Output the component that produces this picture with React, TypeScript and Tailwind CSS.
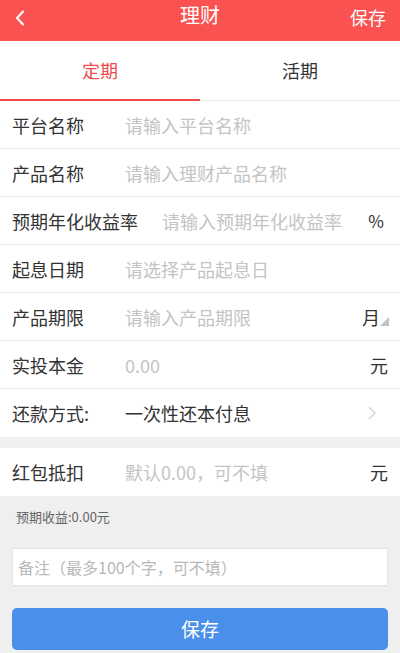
import React from "react";

const font = { fontFamily: '"Noto Sans CJK SC", "Noto Sans", sans-serif' };

function Row({
  label,
  placeholder,
  value,
  suffix,
  last,
}: {
  label: string;
  placeholder?: string;
  value?: string;
  suffix?: React.ReactNode;
  last?: boolean;
}) {
  return (
    <div
      className={`flex items-center h-[48px] pl-[12px] pr-[12px] bg-white ${
        last ? "" : "border-b border-[#eeeeee]"
      }`}
    >
      <div className="min-w-[89px] mr-[24px] text-[18px] text-[#333333] whitespace-nowrap leading-none">
        {label}
      </div>
      <div
        className={`flex-1 text-[18px] leading-none whitespace-nowrap ${
          value ? "text-[#333333]" : "text-[#c4c4c4]"
        }`}
      >
        {value ?? placeholder}
      </div>
      {suffix}
    </div>
  );
}

export default function App() {
  return (
    <div className="w-[400px] h-[653px] bg-[#efefef] overflow-hidden" style={font}>
      {/* Header */}
      <div className="h-[41px] bg-[#fa5151] flex items-center justify-between px-[14px] pb-[10px] pt-[2px] relative">
        <svg width="12" height="16" viewBox="0 0 12 16" className="mt-[2px]">
          <path d="M9 1.5 L3 8 L9 14.5" fill="none" stroke="white" strokeWidth="2" strokeLinecap="round" strokeLinejoin="round" />
        </svg>
        <div className="absolute left-1/2 -translate-x-1/2 top-[2px] text-white text-[20px] leading-[26px]">理财</div>
        <div className="text-white text-[18px] leading-[26px] mr-[0px]">保存</div>
      </div>

      {/* Tabs */}
      <div className="h-[60px] bg-white flex border-b border-[#eeeeee]">
        <div className="flex-1 flex items-center justify-center relative text-[18px] text-[#f04b4b]">
          定期
          <div className="absolute left-0 right-0 bottom-[-1px] h-[2px] bg-[#f04b4b]" />
        </div>
        <div className="flex-1 flex items-center justify-center text-[18px] text-[#333333]">活期</div>
      </div>

      {/* Form */}
      <div className="bg-white">
        <Row label="平台名称" placeholder="请输入平台名称" />
        <Row label="产品名称" placeholder="请输入理财产品名称" />
        <Row
          label="预期年化收益率"
          placeholder="请输入预期年化收益率"
          suffix={<span className="text-[17px] text-[#333333] leading-none pr-[4px]">%</span>}
        />
        <Row label="起息日期" placeholder="请选择产品起息日" />
        <Row
          label="产品期限"
          placeholder="请输入产品期限"
          suffix={
            <span className="flex items-end">
              <span className="text-[18px] text-[#333333] leading-none">月</span>
              <svg width="9" height="9" viewBox="0 0 9 9" className="mb-[0px] -mr-[1px]">
                <path d="M9 0 L9 9 L0 9 Z" fill="#c0c4c8" />
              </svg>
            </span>
          }
        />
        <Row
          label="实投本金"
          placeholder="0.00"
          suffix={<span className="text-[18px] text-[#333333] leading-none">元</span>}
        />
        <Row
          label="还款方式:"
          value="一次性还本付息"
          last
          suffix={
            <svg width="8" height="14" viewBox="0 0 8 14" className="mr-[12px]">
              <path d="M1 1 L7 7 L1 13" fill="none" stroke="#cfcfcf" strokeWidth="1.3" />
            </svg>
          }
        />
      </div>

      <div className="h-[11px]" />

      <div className="bg-white">
        <Row
          label="红包抵扣"
          placeholder="默认0.00，可不填"
          last
          suffix={<span className="text-[18px] text-[#333333] leading-none">元</span>}
        />
      </div>

      {/* Bottom */}
      <div className="px-[12px]">
        <div className="pt-[12px] pl-[4px] text-[13px] text-[#666666] leading-[18px]">预期收益:0.00元</div>
        <div className="mt-[22px] h-[38px] bg-white border border-[#e4e4e4] flex items-center px-[5px] text-[16px] text-[#b8b8b8]">
          备注（最多100个字，可不填）
        </div>
        <div className="mt-[22px] h-[42px] bg-[#4a8fe9] rounded-[5px] flex items-center justify-center text-white text-[19px]">
          保存
        </div>
      </div>
    </div>
  );
}
